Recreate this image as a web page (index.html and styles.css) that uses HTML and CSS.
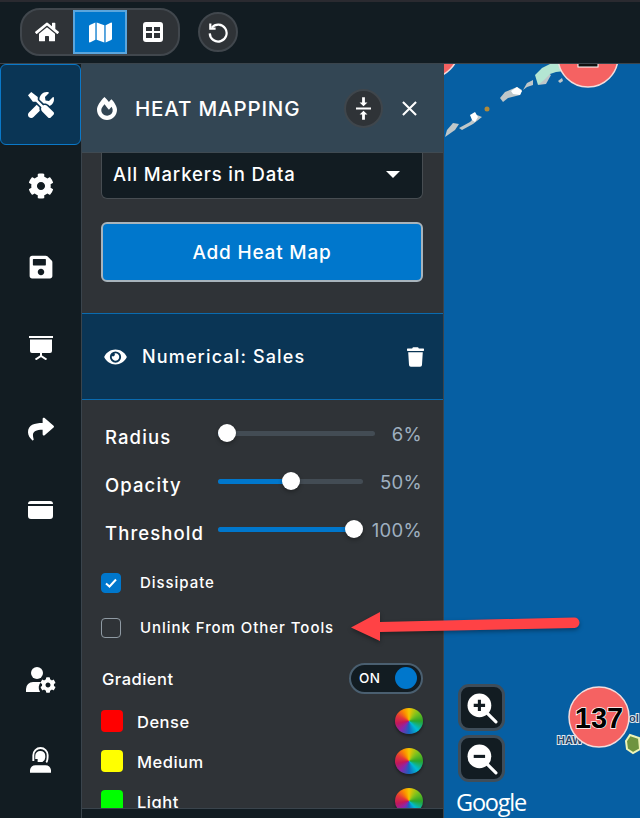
FILE: index.html
```html
<!DOCTYPE html>
<html lang="en">
<head>
  <meta charset="UTF-8">
  <title>Heat Mapping</title>
  <link rel="stylesheet" href="styles.css">
</head>
<body>

  <!-- Top Bar -->
  <header class="topbar">
    <div class="view-group">
      <button class="view-btn">
        <svg class="icon-home" viewBox="0 0 576 512"><path d="M280.37 148.26L96 300.11V464a16 16 0 0 0 16 16l112.06-.29a16 16 0 0 0 15.92-16V368a16 16 0 0 1 16-16h64a16 16 0 0 1 16 16v95.64a16 16 0 0 0 16 16.05L464 480a16 16 0 0 0 16-16V300L295.67 148.26a12.19 12.19 0 0 0-15.3 0zM571.6 251.47L488 182.56V44.05a12 12 0 0 0-12-12h-56a12 12 0 0 0-12 12v72.61L318.47 43a48 48 0 0 0-61 0L4.34 251.47a12 12 0 0 0-1.6 16.9l25.5 31A12 12 0 0 0 45.15 301l235.22-193.74a12.19 12.19 0 0 1 15.3 0L530.9 301a12 12 0 0 0 16.9-1.6l25.5-31a12 12 0 0 0-1.7-16.93z"/></svg>
      </button>
      <button class="view-btn active">
        <svg class="icon-map" viewBox="0 0 576 512" preserveAspectRatio="none"><path d="M0 117.66v346.32c0 11.32 11.43 19.06 21.94 14.86L160 416V32L20.12 87.95A32.006 32.006 0 0 0 0 117.66zM192 416l192 64V96L192 32v384zM554.06 33.16L416 96v384l139.88-55.95A31.996 31.996 0 0 0 576 394.34V48.02c0-11.32-11.43-19.06-21.94-14.86z"/></svg>
      </button>
      <button class="view-btn">
        <svg class="icon-grid" viewBox="0 0 20 20"><path fill-rule="evenodd" d="M3 0h14a3 3 0 0 1 3 3v14a3 3 0 0 1-3 3H3a3 3 0 0 1-3-3V3a3 3 0 0 1 3-3zM3 5v4h6V5zM11 5v4h6V5zM3 11v5h6v-5zM11 11v5h6v-5z"/></svg>
      </button>
    </div>
    <button class="round-btn">
      <svg class="icon-undo" viewBox="0 0 24 24"><path d="M5.2 7.2A9.2 9.2 0 1 1 3 13.5"/><path d="M3.6 2.6v5.8h5.8"/></svg>
    </button>
  </header>

  <div class="main">
    <!-- Side Nav -->
    <nav class="sidenav">
      <a class="nav-item active">
        <svg class="icon-nav" viewBox="0 0 512 512"><path d="M501.1 395.7L384 278.6c-23.1-23.1-57.6-27.6-85.4-13.9L192 158.1V96L64 0 0 64l96 128h62.1l106.6 106.6c-13.6 27.8-9.2 62.3 13.9 85.4l117.1 117.1c14.6 14.6 38.2 14.6 52.7 0l52.7-52.7c14.5-14.6 14.5-38.2-.1-52.7zM331.7 225c28.3 0 54.9 11 74.9 31l19.4 19.4c15.8-6.9 30.8-16.5 43.8-29.5 37.1-37.1 49.7-89.3 37.9-136.7-2.2-9-13.5-12.1-20.1-5.5l-74.4 74.4-67.9-11.3L334 98.9l74.4-74.4c6.6-6.6 3.4-17.9-5.7-20.2-47.4-11.7-99.6.9-136.6 37.9-28.5 28.5-41.9 66.1-41.2 103.6l82.1 82.1c8.1-1.9 16.5-2.9 24.7-2.9zm-103.9 82l-56.7-56.7L18.7 402.8c-25 25-25 65.5 0 90.5s65.5 25 90.5 0l123.6-123.6c-7.6-19.9-9.9-41.6-5-62.7z"/></svg>
      </a>
      <a class="nav-item">
        <svg class="icon-nav" viewBox="0 0 512 512"><path d="M487.4 315.7l-42.6-24.6c4.3-23.2 4.3-47 0-70.2l42.6-24.6c4.9-2.8 7.1-8.6 5.5-14-11.1-35.6-30-67.8-54.7-94.6-3.8-4.1-10-5.1-14.8-2.3L380.8 110c-17.9-15.4-38.5-27.3-60.8-35.1V25.8c0-5.6-3.9-10.5-9.4-11.7-36.7-8.2-74.3-7.8-109.2 0-5.5 1.2-9.4 6.1-9.4 11.7V75c-22.2 7.9-42.8 19.8-60.8 35.1L88.7 85.5c-4.9-2.8-11-1.9-14.8 2.3-24.7 26.7-43.6 58.9-54.7 94.6-1.7 5.4.6 11.2 5.5 14L67.3 221c-4.3 23.2-4.3 47 0 70.2l-42.6 24.6c-4.9 2.8-7.1 8.6-5.5 14 11.1 35.6 30 67.8 54.7 94.6 3.8 4.1 10 5.1 14.8 2.3l42.6-24.6c17.9 15.4 38.5 27.3 60.8 35.1v49.2c0 5.6 3.9 10.5 9.4 11.7 36.7 8.2 74.3 7.8 109.2 0 5.5-1.2 9.4-6.1 9.4-11.7v-49.2c22.2-7.9 42.8-19.8 60.8-35.1l42.6 24.6c4.9 2.8 11 1.9 14.8-2.3 24.7-26.7 43.6-58.9 54.7-94.6 1.5-5.5-.7-11.3-5.6-14.1zM256 336c-44.1 0-80-35.9-80-80s35.9-80 80-80 80 35.9 80 80-35.9 80-80 80z"/></svg>
      </a>
      <a class="nav-item">
        <svg class="icon-nav" viewBox="0 0 448 512"><path d="M433.941 129.941l-83.882-83.882A48 48 0 0 0 316.118 32H48C21.49 32 0 53.49 0 80v352c0 26.51 21.49 48 48 48h352c26.51 0 48-21.49 48-48V163.882a48 48 0 0 0-14.059-33.941zM224 416c-35.346 0-64-28.654-64-64 0-35.346 28.654-64 64-64s64 28.654 64 64c0 35.346-28.654 64-64 64zm96-304.52V212c0 6.627-5.373 12-12 12H76c-6.627 0-12-5.373-12-12V108c0-6.627 5.373-12 12-12h228.52c3.183 0 6.235 1.264 8.485 3.515l3.48 3.48A11.996 11.996 0 0 1 320 111.48z"/></svg>
      </a>
      <a class="nav-item">
        <svg class="icon-board" viewBox="0 0 24 24"><path d="M0 0h24v2H0zM1 3.500h22V15a2 2 0 0 1-2 2H3a2 2 0 0 1-2-2z"/><path class="stroke-white" d="M12 17v3M6.500 23.500l5.500-3.500 5.500 3.500"/></svg>
      </a>
      <a class="nav-item">
        <svg class="icon-nav" viewBox="0 0 512 512"><path d="M503.691 189.836L327.687 37.851C312.281 24.546 288 35.347 288 56.015v80.053C127.371 137.907 0 170.1 0 322.326c0 61.441 39.581 122.309 83.333 154.132 13.653 9.931 33.111-2.533 28.077-18.631C66.066 312.814 132.917 274.316 288 272.085V360c0 20.7 24.3 31.453 39.687 18.164l176-152c11.071-9.562 11.086-26.753 0-36.328z"/></svg>
      </a>
      <a class="nav-item">
        <svg class="icon-window" viewBox="0 0 25 18"><path d="M3 0h19a3 3 0 0 1 3 3H0a3 3 0 0 1 3-3zM0 5h25v10a3 3 0 0 1-3 3H3a3 3 0 0 1-3-3z"/></svg>
      </a>
      <div class="nav-spacer"></div>
      <a class="nav-item">
        <svg class="icon-user" viewBox="0 0 30 26">
          <circle cx="11" cy="6" r="6"/>
          <path d="M0 25v-3a7 7 0 0 1 7-7h8a8 8 0 0 0-1 10z"/>
          <svg x="14" y="10" width="16" height="16" viewBox="0 0 512 512"><path d="M487.4 315.7l-42.6-24.6c4.3-23.2 4.3-47 0-70.2l42.6-24.6c4.9-2.8 7.1-8.6 5.5-14-11.1-35.6-30-67.8-54.7-94.6-3.8-4.1-10-5.1-14.8-2.3L380.8 110c-17.9-15.4-38.5-27.3-60.8-35.1V25.8c0-5.6-3.9-10.5-9.4-11.7-36.7-8.2-74.3-7.8-109.2 0-5.5 1.2-9.4 6.1-9.4 11.7V75c-22.2 7.9-42.8 19.8-60.8 35.1L88.7 85.5c-4.9-2.8-11-1.9-14.8 2.3-24.7 26.7-43.6 58.9-54.7 94.6-1.7 5.4.6 11.2 5.5 14L67.3 221c-4.3 23.2-4.3 47 0 70.2l-42.6 24.6c-4.9 2.8-7.1 8.6-5.5 14 11.1 35.6 30 67.8 54.7 94.6 3.8 4.1 10 5.1 14.8 2.3l42.6-24.6c17.9 15.4 38.5 27.3 60.8 35.1v49.2c0 5.6 3.9 10.5 9.4 11.7 36.7 8.2 74.3 7.8 109.2 0 5.5-1.2 9.4-6.1 9.4-11.7v-49.2c22.2-7.9 42.8-19.8 60.8-35.1l42.6 24.6c4.9 2.8 11 1.9 14.8-2.3 24.7-26.7 43.6-58.9 54.7-94.6 1.5-5.5-.7-11.3-5.6-14.1zM256 336c-44.1 0-80-35.9-80-80s35.9-80 80-80 80 35.9 80 80-35.9 80-80 80z"/></svg>
        </svg>
      </a>
      <a class="nav-item">
        <svg class="icon-headset" viewBox="0 0 22 28">
          <path class="stroke-white" d="M3.500 15.500V9.500a7.500 7.500 0 0 1 15 0c0 3.500 0 6-1.500 7.500"/>
          <path d="M11 5a5 5 0 0 1 5 5v2a5 5 0 0 1-3 4.500H8v-3H5.500V10a5 5 0 0 1 5.500-5z"/>
          <path d="M0 28v-3a6 6 0 0 1 6-5h10a6 6 0 0 1 6 5v3z"/>
        </svg>
      </a>
    </nav>

    <!-- Heat Mapping Panel -->
    <section class="panel">
      <div class="panel-header">
        <svg class="icon-fire" viewBox="0 0 448 512"><path d="M323.56 51.2c-20.8 19.3-39.58 39.59-56.22 59.97C240.08 73.62 206.28 35.53 168 0 69.74 91.17 0 209.96 0 281.6 0 408.85 100.29 512 224 512s224-103.15 224-230.4c0-53.27-51.98-163.14-124.44-230.4zm-19.47 340.65C282.43 407.01 255.72 416 226.86 416 154.71 416 96 368.26 96 290.75c0-38.61 24.31-72.63 72.79-130.75 6.93 7.98 98.83 125.34 98.83 125.34l58.63-66.88c4.14 6.85 7.91 13.55 11.27 19.97 27.35 52.19 15.81 118.97-33.43 153.42z"/></svg>
        <h2>HEAT MAPPING</h2>
        <button class="compress-btn">
          <svg viewBox="0 0 16 24"><path d="M0 11h16v2H0zM8 9.500L3.800 5.500h2.700V0h3v5.500h2.700zM8 14.500l4.200 4H9.500V24h-3v-5.500H3.800z"/></svg>
        </button>
        <svg class="icon-close" viewBox="0 0 16 16"><path d="M1 1l14 14M15 1L1 15"/></svg>
      </div>

      <div class="panel-body">
        <div class="select-box">
          <span>All Markers in Data</span>
          <span class="caret"></span>
        </div>
        <button class="add-btn">Add Heat Map</button>

        <div class="layer-row">
          <svg class="icon-eye" viewBox="0 0 576 512"><path d="M572.52 241.4C518.29 135.59 410.93 64 288 64S57.68 135.64 3.48 241.41a32.35 32.35 0 0 0 0 29.19C57.71 376.41 165.07 448 288 448s230.32-71.64 284.52-177.41a32.35 32.35 0 0 0 0-29.19zM288 400a144 144 0 1 1 144-144 143.93 143.93 0 0 1-144 144zm0-240a95.31 95.31 0 0 0-25.31 3.79 47.85 47.85 0 0 1-66.9 66.9A95.78 95.78 0 1 0 288 160z"/></svg>
          <span class="layer-name">Numerical: Sales</span>
          <svg class="icon-trash" viewBox="0 0 448 512"><path d="M432 32H312l-9.4-18.7A24 24 0 0 0 281.1 0H166.8a23.72 23.72 0 0 0-21.4 13.3L136 32H16A16 16 0 0 0 0 48v32a16 16 0 0 0 16 16h416a16 16 0 0 0 16-16V48a16 16 0 0 0-16-16zM53.2 467a48 48 0 0 0 47.9 45h245.8a48 48 0 0 0 47.9-45L416 128H32z"/></svg>
        </div>

        <div class="sliders">
          <div class="slider-row">
            <label>Radius</label>
            <div class="track"><div class="fill" style="width: 6%"></div><div class="thumb" style="left: 6%"></div></div>
            <span class="value short">6%</span>
          </div>
          <div class="slider-row">
            <label>Opacity</label>
            <div class="track"><div class="fill" style="width: 50%"></div><div class="thumb" style="left: 50%"></div></div>
            <span class="value">50%</span>
          </div>
          <div class="slider-row">
            <label>Threshold</label>
            <div class="track"><div class="fill" style="width: 94%"></div><div class="thumb" style="left: 94%"></div></div>
            <span class="value">100%</span>
          </div>
        </div>

        <div class="check-row">
          <span class="checkbox checked">
            <svg viewBox="0 0 12 10"><path d="M1 5.500l3.500 3L11 1.500"/></svg>
          </span>
          <span>Dissipate</span>
        </div>
        <div class="check-row">
          <span class="checkbox"></span>
          <span>Unlink From Other Tools</span>
        </div>

        <div class="gradient-head">
          <span>Gradient</span>
          <div class="toggle"><span>ON</span><span class="toggle-knob"></span></div>
        </div>

        <div class="swatch-row">
          <span class="swatch red"></span>
          <span>Dense</span>
          <span class="wheel"></span>
        </div>
        <div class="swatch-row">
          <span class="swatch yellow"></span>
          <span>Medium</span>
          <span class="wheel"></span>
        </div>
        <div class="swatch-row">
          <span class="swatch green"></span>
          <span>Light</span>
          <span class="wheel"></span>
        </div>
      </div>
      <div class="panel-footer"></div>
    </section>

    <!-- Map -->
    <section class="map">
      <svg class="map-canvas" viewBox="444 64 196 754">
        <g class="land-grey">
          <polygon points="500,98 505,92 517,87 522,90 520,95 508,98 503,102"/>
          <polygon points="523,90 527,83 533,80 533,85 527,87"/>
          <polygon points="445,137 447,130 453,123 459,124 455,130"/>
          <polygon points="459,128 470,122 477,115 482,117 473,124 462,130"/>
          <polygon points="538,85 547,72 551,75 546,84"/>
          <polygon points="558,81 562,78 563,81 560,83"/>
        </g>
        <polygon class="land-mint" points="535,75 542,68 550,64 562,64 565,71 556,72 550,74 544,80 538,85"/>
        <g class="land-white">
          <polygon points="511,91 517,87 522,91 520,95 513,94"/>
          <polygon points="470,115 475,112 478,117 475,122 472,120"/>
        </g>
        <circle class="land-dot" cx="487" cy="109" r="2.500"/>
        <circle class="cluster" cx="429" cy="48" r="30"/>
        <circle class="cluster" cx="588" cy="57" r="30"/>
        <rect class="cluster-glyph" x="578" y="63" width="20" height="4"/>
        <text class="place-label" x="557" y="744">HAW</text>
        <text class="place-label" x="629" y="722">ol</text>
        <polygon class="big-island" points="626,741 630,735 639,738 640,749 633,753 627,749"/>
        <circle class="cluster" cx="599" cy="717" r="30"/>
        <text class="cluster-count" x="599" y="728">137</text>
        <text class="google" x="456" y="811">Google</text>
      </svg>
      <div class="zoom-controls">
        <button class="zoom-btn">
          <svg viewBox="0 0 30 30"><circle cx="12" cy="12" r="11.500"/><path class="lens-handle" d="M19 19l9 9"/><path class="lens-mark" d="M6.500 12h11M12 6.500v11"/></svg>
        </button>
        <button class="zoom-btn">
          <svg viewBox="0 0 30 30"><circle cx="12" cy="12" r="11.500"/><path class="lens-handle" d="M19 19l9 9"/><path class="lens-mark" d="M6.500 12h11"/></svg>
        </button>
      </div>
    </section>
  </div>

  <!-- Annotation arrow -->
  <svg class="arrow" viewBox="0 0 640 818">
    <path d="M351 627.500L380 612V622L574 617.500a5 5 0 0 1 0.500 10.500L380 632V641z"/>
  </svg>

</body>
</html>
```

FILE: styles.css
```css
/* Universal Styles */
* { box-sizing: border-box; margin: 0; padding: 0; }

body {
  font-family: Inter, 'Open Sans', sans-serif;
  width: 640px;
  height: 818px;
  overflow: hidden;
  position: relative;
  background: #121c22;
  color: #fff;
  display: flex;
  flex-direction: column;
}

svg { fill: #fff; display: block; }
button { font-family: inherit; border: none; cursor: pointer; color: #fff; }
.stroke-white { fill: none; stroke: #fff; stroke-width: 2; }

/* Top Bar */
.topbar {
  height: 64px;
  flex: none;
  display: flex;
  align-items: center;
  gap: 18px;
  padding: 2px 0 0 20px;
  border-top: 2px solid #2a2a30;
  border-bottom: 1px solid #3a444c;
}

.view-group {
  display: flex;
  height: 48px;
  width: 160px;
  background: #2f3337;
  border: 2px solid #41474d;
  border-radius: 20px;
  overflow: hidden;
  margin-top: -3px;
}

.view-btn {
  flex: 1;
  background: none;
  display: flex;
  align-items: center;
  justify-content: center;
}

.view-btn.active { background: #0077cc; border: 2px solid #5ba5dc; }
.icon-home { width: 24px; height: 24px; }
.icon-map { width: 23px; height: 23px; }
.icon-grid { width: 20px; height: 20px; }

.round-btn {
  width: 40px;
  height: 40px;
  border-radius: 50%;
  background: #2f3337;
  border: 2px solid #41474d;
  display: flex;
  align-items: center;
  justify-content: center;
  margin-top: -4px;
}

.icon-undo { width: 22px; height: 22px; fill: none; stroke: #fff; stroke-width: 2.400; }

.main { flex: 1; display: flex; min-height: 0; }

/* Side Nav */
.sidenav {
  width: 82px;
  flex: none;
  display: flex;
  flex-direction: column;
  border-right: 1px solid #3a444c;
}

.nav-item {
  height: 81px;
  flex: none;
  display: flex;
  align-items: center;
  justify-content: center;
}

.nav-item.active {
  background: #0a3555;
  border: 1px solid #0a78c8;
  border-radius: 6px;
}

.nav-spacer { flex: 1; }
.nav-item:last-child { height: 79px; margin-bottom: 19px; }
.icon-nav { width: 26px; height: 26px; }
.icon-board { width: 24px; height: 24px; }
.icon-window { width: 25px; height: 18px; }
.icon-user { width: 30px; height: 26px; }
.icon-headset { width: 21px; height: 27px; }

/* Panel */
.panel {
  width: 362px;
  flex: none;
  background: #2f3337;
  border-right: 1px solid #3a444c;
  display: flex;
  flex-direction: column;
}

.panel-header {
  height: 89px;
  flex: none;
  background: #334654;
  border-bottom: 1px solid #3f4a52;
  display: flex;
  align-items: center;
  padding: 0 26px 0 15px;
}

.icon-fire { width: 20px; height: 25px; margin-right: 18px; }

.panel-header h2 {
  font-size: 20.500px;
  font-weight: 500;
  letter-spacing: 0.850px;
  flex: 1;
}

.compress-btn {
  width: 39px;
  height: 39px;
  border-radius: 50%;
  background: #2f3337;
  border: 2px solid #3f464c;
  display: flex;
  align-items: center;
  justify-content: center;
  margin-right: 19px;
}

.compress-btn svg { width: 15px; height: 23px; }
.icon-close { width: 15px; height: 15px; fill: none; stroke: #fff; stroke-width: 2.200; }

.panel-body { flex: 1; overflow: hidden; min-height: 0; }

.select-box {
  height: 46px;
  margin: 0 20px 0 19px;
  background: #121c22;
  border: 1px solid #474d52;
  border-top: none;
  border-radius: 0 0 6px 6px;
  padding: 0 22px 3px 11px;
  display: flex;
  align-items: center;
  justify-content: space-between;
  font-size: 18.500px;
  font-weight: 500;
  letter-spacing: 0.850px;
}

.caret {
  width: 0;
  height: 0;
  border-left: 7px solid transparent;
  border-right: 7px solid transparent;
  border-top: 7px solid #fff;
}

.add-btn {
  display: block;
  width: 322px;
  height: 60px;
  margin: 23px 0 31px 19px;
  background: #0077cc;
  border: 2px solid #a8b4bc;
  border-radius: 6px;
  font-size: 19px;
  font-weight: 500;
  letter-spacing: 0.800px;
}

.layer-row {
  height: 87px;
  background: #0a3555;
  border-top: 1px solid #0a6bb0;
  border-bottom: 1px solid #0a6bb0;
  display: flex;
  align-items: center;
  padding: 0 19px 0 22px;
  font-size: 18px;
  font-weight: 500;
  letter-spacing: 1.150px;
}

.icon-eye { width: 23px; height: 20px; margin-right: 15px; }
.layer-name { flex: 1; }
.icon-trash { width: 17px; height: 20px; }

/* Sliders */
.sliders { padding: 13px 23px 0 23px; }

.slider-row {
  height: 48px;
  display: flex;
  align-items: center;
  font-size: 18.500px;
  font-weight: 500;
  letter-spacing: 1.100px;
}

.slider-row label { width: 113px; flex: none; }

.track {
  flex: 1;
  height: 5px;
  margin-bottom: 7px;
  background: #434c54;
  border-radius: 3px;
  position: relative;
}

.fill { height: 100%; background: #0077cc; border-radius: 3px; }

.thumb {
  position: absolute;
  top: -7px;
  width: 18px;
  height: 18px;
  margin-left: -9px;
  background: #fff;
  border-radius: 50%;
  box-shadow: 0 2px 4px rgba(0, 0, 0, 0.3);
}

.value {
  width: 59px;
  flex: none;
  margin: 0 -2px 6px 0;
  text-align: right;
  font-size: 18.500px;
  font-weight: 400;
  letter-spacing: 0.300px;
  color: #9fb0c0;
  white-space: nowrap;
}

.value.short { width: 47px; }

.check-row {
  height: 45px;
  display: flex;
  align-items: center;
  gap: 19px;
  padding-left: 19px;
  font-size: 15px;
  font-weight: 500;
  letter-spacing: 0.950px;
}

.sliders + .check-row { margin-top: 3px; }

.checkbox {
  width: 20px;
  height: 20px;
  flex: none;
  border: 1px solid #8f9aa3;
  border-radius: 4px;
  display: flex;
  align-items: center;
  justify-content: center;
}

.checkbox.checked { background: #0077cc; border-color: #0077cc; }
.checkbox svg { width: 12px; height: 10px; fill: none; stroke: #fff; stroke-width: 2; }

/* Gradient */
.gradient-head {
  height: 30px;
  margin-top: 13px;
  padding: 0 20px 0 20px;
  display: flex;
  align-items: center;
  justify-content: space-between;
  font-size: 16.500px;
  font-weight: 500;
  letter-spacing: 0.500px;
}

.gradient-head > span { padding-top: 2px; }

.toggle {
  width: 74px;
  height: 31px;
  background: #121c22;
  border: 2px solid #4a5f70;
  border-radius: 16px;
  display: flex;
  align-items: center;
  justify-content: space-between;
  padding: 0 4px 0 8px;
  font-size: 13.500px;
}

.toggle-knob { width: 22px; height: 22px; border-radius: 50%; background: #0077cc; }

.swatch-row {
  height: 40px;
  display: flex;
  align-items: center;
  padding: 0 20px 0 19px;
  font-size: 16.500px;
  font-weight: 500;
  letter-spacing: 0.500px;
}

.gradient-head + .swatch-row { margin-top: 8px; }
.swatch-row span:nth-child(2) { flex: 1; padding-top: 2px; }
.swatch { width: 22px; height: 22px; border-radius: 4px; margin-right: 14px; flex: none; }
.red { background: #f00; }
.yellow { background: #ff0; }
.green { background: #0f0; }

.wheel {
  width: 28px;
  height: 26px;
  border-radius: 50%;
  background: conic-gradient(#f5c400, #7fc31c, #2aa52a 25%, #00bcd4 38%, #1565c0 50%, #8e24aa 62%, #c2185b 72%, #e53935 82%, #fb8c00 92%, #f5c400);
  box-shadow: 0 2px 3px rgba(0, 0, 0, 0.4);
  flex: none;
}

.panel-footer { height: 10px; flex: none; background: #121c22; border-top: 1px solid #3a444c; }

/* Map */
.map {
  flex: 1;
  background: #065fa3;
  position: relative;
  overflow: hidden;
}

.map-canvas { position: absolute; inset: 0; width: 100%; height: 100%; }
.land-grey { fill: #bfc7c9; }
.land-mint { fill: #b4e6d3; }
.land-white { fill: #fff; }
.land-dot { fill: #b08a3a; }
.big-island { fill: #6f9440; stroke: #eef4b8; stroke-width: 2; }
.cluster { fill: #f56262; stroke: #f3dcdc; stroke-width: 1.500; }
.cluster-glyph { fill: #111; stroke: #fff; stroke-width: 1; }
.place-label { font-family: 'Liberation Sans', sans-serif; font-size: 11px; font-weight: 700; fill: #26466a; stroke: #dfe6ee; stroke-width: 2; paint-order: stroke; }
.cluster-count { font-family: 'Liberation Sans', sans-serif; font-size: 29px; font-weight: 700; text-anchor: middle; fill: #000; stroke: #fff; stroke-width: 1.500; paint-order: stroke; }
.google { font-family: 'Open Sans', sans-serif; font-size: 23.500px; font-weight: 500; fill: #fff; letter-spacing: -1.200px; }

.zoom-controls {
  position: absolute;
  left: 14px;
  top: 620px;
  display: flex;
  flex-direction: column;
  gap: 4px;
}

.zoom-btn {
  width: 47px;
  height: 47px;
  background: #121c22;
  border: 3px solid #3f4d59;
  border-radius: 11px;
  display: flex;
  align-items: center;
  justify-content: center;
}

.zoom-btn svg { width: 31px; height: 31px; margin: 2px 0 0 2px; }
.lens-handle { stroke: #fff; stroke-width: 3; stroke-linecap: round; }
.lens-mark { stroke: #121c22; stroke-width: 3; fill: none; }

/* Annotation */
.arrow {
  position: absolute;
  inset: 0;
  width: 640px;
  height: 818px;
  fill: #ff4245;
  filter: drop-shadow(0 2px 2px rgba(0, 0, 0, 0.35));
  pointer-events: none;
}
```
